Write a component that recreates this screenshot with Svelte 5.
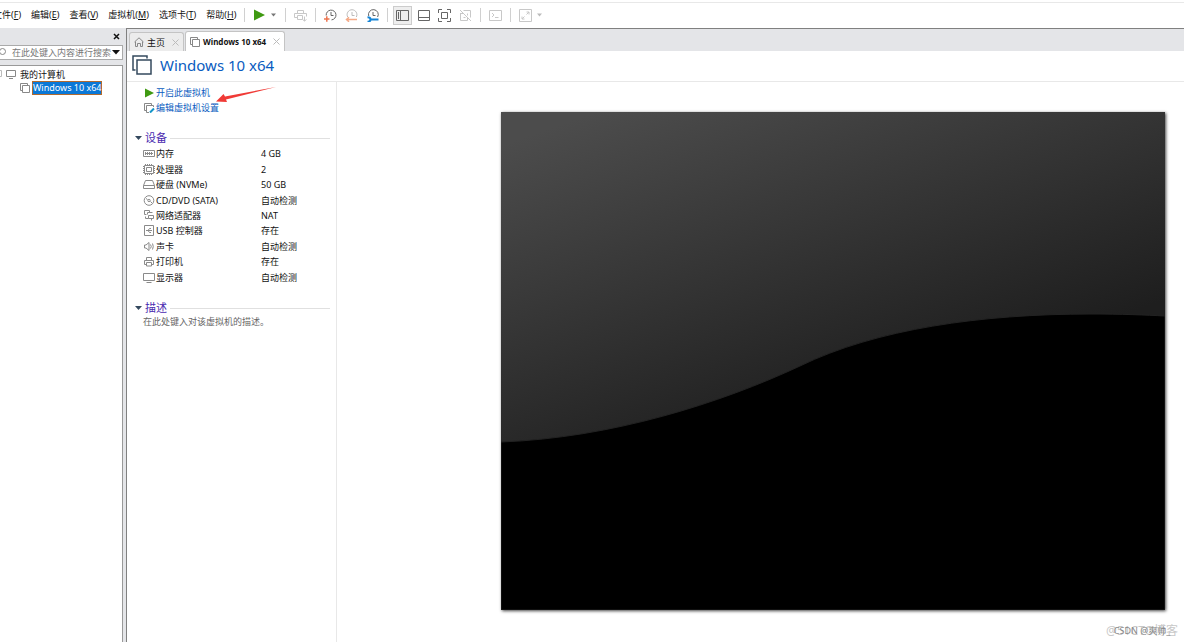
<script>
  const menus = [['文件', 'F'], ['编辑', 'E'], ['查看', 'V'], ['虚拟机', 'M'], ['选项卡', 'T'], ['帮助', 'H']];
  const devices = [
    ['memory', '内存', '4 GB'],
    ['cpu', '处理器', '2'],
    ['disk', '硬盘 (NVMe)', '50 GB'],
    ['cd', 'CD/DVD (SATA)', '自动检测'],
    ['network', '网络适配器', 'NAT'],
    ['usb', 'USB 控制器', '存在'],
    ['sound', '声卡', '自动检测'],
    ['printer', '打印机', '存在'],
    ['display', '显示器', '自动检测']
  ];
  let query = $state('');
</script>

{#snippet vmIcon()}
  <svg class="vm" viewBox="0 0 10 10"><path d="M2.5 7.5h-2v-7h7v2M2.5 2.5h7v7h-7z" /></svg>
{/snippet}

<div class="app">
  <header class="bar">
    <nav class="menus" aria-label="菜单">
      {#each menus as [name, key]}
        <button>{name}(<u>{key}</u>)</button>
      {/each}
    </nav>
    <div class="tools">
      <i class="sep"></i>
      <button class="play" aria-label="开启">
        <svg width="11" height="12" viewBox="0 0 11 12"><path fill="#3f9a12" d="M0 0.500 11 6 0 11.500z" /></svg>
        <svg width="5" height="4" viewBox="0 0 5 4"><path fill="#777" d="M0 0.500h5L2.500 3.500z" /></svg>
      </button>
      <i class="sep"></i>
      <button aria-label="发送" class="off">
        <svg class="ico" viewBox="0 0 13 13"><path d="M3.500 4.500v-3h6v3M3.500 8.500h-3v-4h12v3M3.500 6.500h5v4h-5zM10.500 7.500v4.500M8.500 10.500l2 1.500 2-1.500" /></svg>
      </button>
      <i class="sep"></i>
      <button aria-label="拍摄快照">
        <svg class="ico" viewBox="0 0 13 13"><path d="M2.200 6.500A4.900 4.900 0 1 1 7.500 10.900M7 3v3.500h2.500" /><path stroke="#ee7650" stroke-width="1.500" d="M0 10h5.500M2.800 7.200v5.500" /></svg>
      </button>
      <button aria-label="恢复快照">
        <svg class="ico" viewBox="0 0 13 13"><path stroke="#bbb" d="M2.700 8A4.900 4.900 0 1 1 11.300 8M7 3v3.500h2.500" /><path stroke="#f5aa87" stroke-width="1.500" d="M2 10.500h10M4 8.200 1.500 10.500 4 12.800" /></svg>
      </button>
      <button aria-label="管理快照">
        <svg class="ico" viewBox="0 0 13 13"><path d="M2.700 7A4.900 4.900 0 1 1 11.600 8M7 3v3.500h2.500" /><path stroke="#1584d6" stroke-width="2" d="M4 10.500h8.500M1.500 8.300q3 0 3 2.200t-3 2.200" /></svg>
      </button>
      <i class="sep"></i>
      <button class="on" aria-label="显示库">
        <svg class="ico" viewBox="0 0 13 13"><path d="M.5 1.500h12v10H.5zM4.500 1.500v10M2.500 3v7" /></svg>
      </button>
      <button aria-label="缩略图栏">
        <svg class="ico" viewBox="0 0 13 13"><path d="M1.500 1.500h11v10h-11zM1.500 8.500h11" /></svg>
      </button>
      <button aria-label="全屏">
        <svg class="ico" viewBox="0 0 13 13"><path d="M.5 4V.5H4M9 .5h3.500V4M12.500 9v3.500H9M4 12.500H.5V9M3.500 3.500h6v6h-6z" /></svg>
      </button>
      <button class="off" aria-label="Unity">
        <svg class="ico" viewBox="0 0 13 13"><path d="M1 1l11 11M4.500 1.500h7v7M1.500 4v7.500h7v-3M1.500 4.500h3M8.500 4.500v2M4.500 8.500h2" /></svg>
      </button>
      <i class="sep"></i>
      <button class="off" aria-label="控制台">
        <svg class="ico" viewBox="0 0 13 13"><path d="M.5 1.500h12v10H.5zM3 4l2 2-2 2M6 8.500h3.500" /></svg>
      </button>
      <i class="sep"></i>
      <button class="off" aria-label="拉伸">
        <svg class="ico" viewBox="0 0 13 13"><path d="M.5.5h12v12H.5zM7.500 3H10v2.500M10 3 7.500 5.500M5.500 10H3V7.500M3 10l2.500-2.500" /></svg>
      </button>
      <svg width="5" height="4" viewBox="0 0 5 4"><path fill="#bbb" d="M0 0.500h5L2.500 3.500z" /></svg>
    </div>
  </header>

  <div class="body">
    <aside>
      <div class="libhead">
        <button aria-label="关闭库"><svg width="7" height="7" viewBox="0 0 7 7"><path stroke="#111" stroke-width="1.500" d="M1 1l5 5M6 1 1 6" /></svg></button>
      </div>
      <label class="search">
        <svg width="7" height="9" viewBox="0 0 7 9"><circle cx="2.500" cy="3.500" r="3" fill="none" stroke="#888" /></svg>
        <input bind:value={query} placeholder="在此处键入内容进行搜索" aria-label="搜索" />
        <svg width="8" height="5" viewBox="0 0 8 5"><path fill="#111" d="M0 0h8L4 4.500z" /></svg>
      </label>
      <div class="tree">
        <div class="node">
          <svg width="17" height="10" viewBox="0 0 17 10"><path fill="none" stroke="#bbb" d="M0 1.500h1.500v6H0" /><path fill="none" stroke="#888" d="M6.500 1.500h9v6h-9zM9 9.500h4" /></svg>
          <span>我的计算机</span>
        </div>
        <div class="node child">{@render vmIcon()}<span class="sel">Windows 10 x64</span></div>
      </div>
    </aside>

    <main>
      <div class="tabs">
        <button class="tab">
          <svg width="10" height="10" viewBox="0 0 10 10"><path fill="none" stroke="#888" d="M.5 5 5 .8 9.500 5M1.500 4.500v5h2v-3h3v3h2v-5" /></svg>
          <span>主页</span>
          <svg class="x" viewBox="0 0 7 7"><path d="M.5.5l6 6M6.500.5l-6 6" /></svg>
        </button>
        <button class="tab current">
          {@render vmIcon()}
          <span>Windows 10 x64</span>
          <svg class="x" viewBox="0 0 7 7"><path d="M.5.5l6 6M6.500.5l-6 6" /></svg>
        </button>
      </div>
      <div class="title">
        <svg width="20" height="20" viewBox="0 0 20 20"><path fill="none" stroke="#34495e" stroke-width="1.500" d="M3.500 15H1V1h14v2.500M5 5h14v14H5z" /></svg>
        <h1>Windows 10 x64</h1>
      </div>
      <div class="content">
        <section class="info">
          <div class="actions">
            <a href="#start"><svg width="11" height="10" viewBox="0 0 11 10"><path fill="#3f9a12" d="M1 .5 10 5 1 9.500z" /></svg>开启此虚拟机</a>
            <a href="#edit"><svg width="11" height="10" viewBox="0 0 11 10"><path fill="none" stroke="#888" d="M2.500 7.500h-2v-7h7v2M5 9.500H2.500v-7h7V4" /><path stroke="#1495c8" stroke-width="2" d="M6 9.500l4-4" /></svg>编辑虚拟机设置</a>
            <svg class="arrow" width="60" height="17" viewBox="0 0 60 17"><path fill="#f03a36" d="M60 0 9 9.500 7.500 7 0 14.500l11 .5-1-2.500z" /></svg>
          </div>
          <h2><svg width="7" height="4" viewBox="0 0 7 4"><path fill="#34495e" d="M0 0h7L3.500 4z" /></svg>设备</h2>
          <table>
            <tbody>
              {#each devices as [kind, name, value]}
                <tr>
                  <th scope="row">
                    <span>
                      <svg class="dev" viewBox="0 0 12 11">
                        {#if kind === 'memory'}
                          <path d="M.5 2.500h11v6H.5zM2.500 4v3M4.500 4v3M6.500 4v3M8.500 4v3M10 5.500H2" />
                        {:else if kind === 'cpu'}
                          <path d="M1.500 1.500h9v8h-9zM3.500 3.500h5v4h-5z" /><path stroke-dasharray="1 1" d="M.5 2v7M11.500 2v7M2 .5h8M2 10.500h8" />
                        {:else if kind === 'disk'}
                          <path d="M.5 6.500 2.500 1.500h7l2 5v3H.5zM.5 6.500h11" />
                        {:else if kind === 'cd'}
                          <circle cx="6" cy="5.500" r="4.800" /><circle cx="6" cy="5.500" r="1.200" /><path d="M3 3.500 4.500 4.500M7.500 6.500 9 8" />
                        {:else if kind === 'network'}
                          <path d="M3.500 4.500h-2v-4h5v2M4.500 4.500v-2h5M5.500 5.500h5v3h-5zM2.500 6.500v2h3M8.500 8.500v2" />
                        {:else if kind === 'usb'}
                          <path d="M1.500.5h9v10h-9zM3 5.500h6M5 5.500 6.500 3.500H8M5 5.500 6.500 7.500H8" />
                        {:else if kind === 'sound'}
                          <path d="M1.500 4v3h1.500l3 2.500v-8L3 4zM7.500 3.500q1.500 2 0 4M9.500 2.500q1.500 3 0 6" />
                        {:else if kind === 'printer'}
                          <path d="M3.500 4V1.500h5V4M3.500 8.500h-2v-4h9v4h-2M3.500 6.500h5v3.500h-5z" />
                        {:else}
                          <path d="M.5 1.500h11v7H.5zM3.500 10.500h5" />
                        {/if}
                      </svg>{name}
                    </span>
                  </th>
                  <td>{value}</td>
                </tr>
              {/each}
            </tbody>
          </table>
          <h2><svg width="7" height="4" viewBox="0 0 7 4"><path fill="#34495e" d="M0 0h7L3.500 4z" /></svg>描述</h2>
          <p>在此处键入对该虚拟机的描述。</p>
        </section>
        <section class="preview">
          <svg class="screen" viewBox="0 0 664 498">
            <defs>
              <linearGradient id="shade" gradientUnits="userSpaceOnUse" x1="10" y1="30" x2="132" y2="376">
                <stop offset="0" stop-color="#4c4c4c" /><stop offset="1" stop-color="#1e1e1e" />
              </linearGradient>
            </defs>
            <path fill="url(#shade)" d="M0 0h664v498H0z" />
            <path stroke="#222" d="M0 330C110 326 220 291 299 254C375 217 480 202 590 202C620 202 645 203 664 204V498H0z" />
          </svg>
        </section>
      </div>
    </main>
  </div>
  <div class="mark"><span class="big">@51CTO博客</span><span class="small">CSDN @爽帅_</span></div>
</div>

<style>
  :global(body) { margin: 0; }
  .app {
    position: relative;
    display: flex;
    flex-direction: column;
    min-height: 100vh;
    overflow: hidden;
    background: #fff;
    color: #111;
    font: 9px/15px "Noto Sans", "Noto Sans CJK SC", sans-serif;
  }
  svg { flex: none; display: block; }
  button { border: 0; padding: 0; background: none; font: inherit; color: inherit; white-space: nowrap; }
  .bar { display: flex; align-items: center; height: 28px; box-sizing: border-box; border-top: 2px solid #fff; box-shadow: inset 0 1px #e8e8e8; }
  .menus { display: flex; flex: none; gap: 10px; width: 248px; margin-left: -7px; padding-bottom: 2px; }
  .tools { display: flex; align-items: center; gap: 2px; }
  .tools button { display: grid; place-items: center; width: 19px; height: 19px; box-sizing: border-box; }
  .tools .play { display: flex; justify-content: space-between; width: 30px; padding: 0 4px; }
  .tools .on { border: 1px solid #ccc; background: #eee; }
  .sep { width: 1px; height: 14px; margin: 0 3px; background: #d0d0d0; }
  .ico { width: 13px; height: 13px; fill: none; stroke: #666; }
  .off .ico { stroke: #c8c8c8; }

  .body { display: flex; flex: 1; background: #e4e5e8; }
  aside { display: flex; flex-direction: column; flex: none; width: 123px; }
  .libhead { display: flex; justify-content: flex-end; align-items: center; height: 17px; padding-right: 3px; }
  .search { display: flex; align-items: center; height: 15px; box-sizing: border-box; padding-right: 2px; border: solid #aaa; border-width: 1px 1px 1px 0; background: #fff; }
  .search input { flex: 1; min-width: 0; padding: 0 0 0 5px; border: 0; outline: 0; background: none; font: inherit; line-height: 13px; }
  .search input::placeholder { color: #777; opacity: 1; }
  .tree { flex: 1; margin-top: 5px; padding-top: 1px; border: solid #999; border-width: 1px 1px 0 0; background: #fff; }
  .node { display: flex; align-items: center; gap: 3px; height: 14px; }
  .child { padding-left: 20px; }
  .sel { height: 12px; line-height: 12px; border: 1px solid #b06a30; margin-left: -1px; background: #0a78d7; color: #fff; white-space: nowrap; }
  .vm { width: 10px; height: 10px; fill: none; stroke: #888; }

  main { display: flex; flex-direction: column; flex: 1; min-width: 0; margin-left: 3px; border: solid #808080; border-width: 1px 0 0 1px; }
  .tabs { display: flex; align-items: flex-end; gap: 1px; height: 22px; padding-left: 2px; }
  .tab { display: flex; align-items: center; gap: 3px; height: 19px; padding: 0 4px; border: 1px solid #c4c4c4; border-bottom: 0; border-radius: 3px 3px 0 0; background: #ececec; }
  .tab .x { margin-left: 4px; }
  .current { height: 20px; background: #fff; font-size: 8px; font-weight: 700; }
  .x { width: 7px; height: 7px; fill: none; stroke: #bbb; }
  .title { display: flex; align-items: center; gap: 8px; height: 31px; box-sizing: border-box; padding: 0 0 2px 5px; border-bottom: 1px solid #e8e8e8; background: #fff; }
  h1 { margin: 0; color: #0a5cc0; font-size: 15px; font-weight: 400; line-height: 22px; }
  .content { display: flex; flex: 1; background: #fff; }
  .info { flex: none; width: 210px; box-sizing: border-box; padding: 3px 6px 0 8px; border-right: 1px solid #e8e8e8; }
  .actions { position: relative; display: flex; flex-direction: column; align-items: flex-start; margin-bottom: 15px; padding-left: 9px; }
  .actions a { display: flex; align-items: center; gap: 1px; color: #0a5cc0; text-decoration: none; }
  .arrow { position: absolute; left: 81px; top: 2px; }
  h2 { display: flex; align-items: center; gap: 3px; margin: 0; color: #4a2ab0; font-size: 11px; font-weight: 400; line-height: 16px; }
  h2::after { content: ""; flex: 1; height: 1px; background: #e0e0e0; }
  table { width: 100%; height: 139px; margin-bottom: 15px; border-collapse: collapse; }
  th, td { padding: 0; font-weight: 400; text-align: left; }
  th { width: 126px; }
  th span { display: flex; align-items: center; gap: 1px; padding-left: 8px; }
  .dev { width: 12px; height: 11px; fill: none; stroke: #8a8a8a; }
  p { margin: 0; padding-left: 8px; color: #666; line-height: 12px; }
  .preview { flex: 1; min-width: 0; padding: 30px 19px 30px 164px; }
  .screen { width: 100%; box-shadow: 1px 1px 3px #444; }
  .mark { position: absolute; right: 6px; bottom: 4px; display: grid; align-items: center; justify-items: center; white-space: nowrap; }
  .mark span { grid-area: 1 / 1; }
  .big { color: #c8c8c8; font-size: 12px; }
  .small { color: #888; font-size: 9px; }
</style>
